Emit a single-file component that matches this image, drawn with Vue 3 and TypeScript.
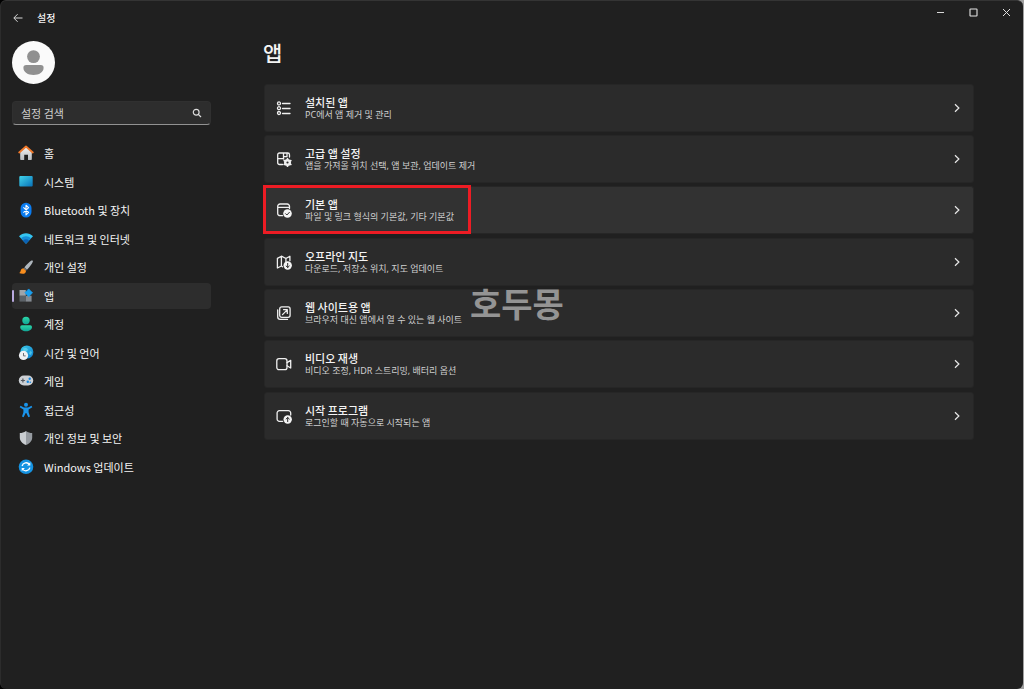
<script setup lang="ts">
import { ref } from 'vue'

interface NavItem { id: string; label: string }
interface AppCard { id: string; title: string; text: string; marked?: boolean }

const query = ref('')
const current = ref('apps')

const navItems: NavItem[] = [
  { id: 'home', label: '홈' },
  { id: 'system', label: '시스템' },
  { id: 'bluetooth', label: 'Bluetooth 및 장치' },
  { id: 'network', label: '네트워크 및 인터넷' },
  { id: 'personal', label: '개인 설정' },
  { id: 'apps', label: '앱' },
  { id: 'accounts', label: '계정' },
  { id: 'time', label: '시간 및 언어' },
  { id: 'gaming', label: '게임' },
  { id: 'access', label: '접근성' },
  { id: 'privacy', label: '개인 정보 및 보안' },
  { id: 'update', label: 'Windows 업데이트' },
]

const cards: AppCard[] = [
  { id: 'installed', title: '설치된 앱', text: 'PC에서 앱 제거 및 관리' },
  { id: 'advanced', title: '고급 앱 설정', text: '앱을 가져올 위치 선택, 앱 보관, 업데이트 제거' },
  { id: 'default', title: '기본 앱', text: '파일 및 링크 형식의 기본값, 기타 기본값', marked: true },
  { id: 'maps', title: '오프라인 지도', text: '다운로드, 저장소 위치, 지도 업데이트' },
  { id: 'websites', title: '웹 사이트용 앱', text: '브라우저 대신 앱에서 열 수 있는 웹 사이트' },
  { id: 'video', title: '비디오 재생', text: '비디오 조정, HDR 스트리밍, 배터리 옵션' },
  { id: 'startup', title: '시작 프로그램', text: '로그인할 때 자동으로 시작되는 앱' },
]
</script>

<template>
  <div class="window">
    <header class="titlebar">
      <div class="title-left">
        <button class="back" type="button" aria-label="뒤로">
          <svg width="10" height="10" viewBox="0 0 10 10" fill="none" stroke="#d8d8d8"><path d="M9.5 5H1M4.6 1.2L.8 5l3.8 3.8" /></svg>
        </button>
        <span class="app-name">설정</span>
      </div>
      <div class="controls">
        <button type="button" aria-label="최소화"><svg width="9" height="9" viewBox="0 0 9 9" fill="none" stroke="#d8d8d8"><path d="M1 4.5h7" /></svg></button>
        <button type="button" aria-label="최대화"><svg width="9" height="9" viewBox="0 0 9 9" fill="none" stroke="#e4e4e4" stroke-width="1.1"><rect x="1" y="1" width="7" height="7" rx=".6" /></svg></button>
        <button type="button" aria-label="닫기"><svg width="9" height="9" viewBox="0 0 9 9" fill="none" stroke="#e0e0e0"><path d="M1 1l7 7M8 1L1 8" /></svg></button>
      </div>
    </header>

    <div class="layout">
      <aside class="sidebar">
        <div class="avatar">
          <svg width="43" height="43" viewBox="0 0 43 43"><circle cx="21.5" cy="21.5" r="21.5" fill="#fafafa" /><g fill="#909090"><circle cx="21.5" cy="15.6" r="6.4" /><path d="M14.2 24h14.6a2.8 2.8 0 0 1 2.8 2.8c0 4.6-4.6 7.2-10.1 7.2s-10.1-2.6-10.1-7.2a2.8 2.8 0 0 1 2.8-2.8z" /></g></svg>
        </div>

        <label class="search">
          <input v-model="query" type="text" placeholder="설정 검색" aria-label="설정 검색" />
          <svg width="10" height="10" viewBox="0 0 10 10" fill="none" stroke="#dedede" stroke-width="1.2"><circle cx="4.2" cy="4.2" r="2.9" /><path d="M6.3 6.3L9 9" /></svg>
        </label>

        <nav class="nav">
          <a
            v-for="item in navItems"
            :key="item.id"
            href="#"
            class="nav-item"
            :class="{ active: item.id === current }"
            :aria-current="item.id === current ? 'page' : undefined"
            @click.prevent="current = item.id"
          >
            <svg width="16" height="16" viewBox="0 0 16 16" aria-hidden="true">
              <defs>
                <linearGradient id="g-screen" x1="0" y1="0" x2="1" y2="1"><stop offset="0" stop-color="#41d4ea" /><stop offset="1" stop-color="#0871b8" /></linearGradient>
                <linearGradient id="g-wall" x1="0" y1="0" x2="0" y2="1"><stop offset="0" stop-color="#f4f4f4" /><stop offset="1" stop-color="#b9bcc0" /></linearGradient>
                <linearGradient id="g-person" x1="0" y1="0" x2="0" y2="1"><stop offset="0" stop-color="#2bd6a8" /><stop offset="1" stop-color="#12a595" /></linearGradient>
                <linearGradient id="g-globe" x1="0" y1="0" x2="1" y2="1"><stop offset="0" stop-color="#3ecbe8" /><stop offset="1" stop-color="#0b7fd0" /></linearGradient>
              </defs>
              <template v-if="item.id === 'home'">
                <path d="M2.2 7L8 1.8 13.8 7v7.2a.7.7 0 0 1-.7.7H10V9.8H6.2v5.1H2.9a.7.7 0 0 1-.7-.7z" fill="url(#g-wall)" />
                <path d="M1.2 7.5L8 1.5l6.8 6" fill="none" stroke="#f0782a" stroke-width="1.8" stroke-linecap="round" stroke-linejoin="round" />
              </template>
              <template v-else-if="item.id === 'system'">
                <rect x="1.3" y="2" width="13.4" height="10.4" rx="1" fill="url(#g-screen)" />
              </template>
              <template v-else-if="item.id === 'bluetooth'">
                <rect x="2.6" y=".7" width="10.9" height="14.8" rx="5.4" fill="#0a7cf0" />
                <path d="M5.4 5.4l5.2 5L8 12.8V3.2l2.6 2.4-5.2 5" fill="none" stroke="#fff" stroke-width="1.1" stroke-linejoin="round" />
              </template>
              <template v-else-if="item.id === 'network'">
                <path d="M1 5.2C4.8 1.1 11.2 1.1 15 5.2L8 12.8z" fill="#35c5f1" />
                <path d="M2.9 7.3C5.7 4.400 10.3 4.400 13.1 7.300L8 12.800z" fill="#168ed8" />
                <path d="M5 9.500c1.700-1.600 4.300-1.600 6 0l-3 3.300z" fill="#0c61b4" />
              </template>
              <template v-else-if="item.id === 'personal'">
                <path d="M13.4 1.6c.8-.6 1.8.1 1.5 1C14.1 5 11.5 8.3 9 10.7L6.5 8.3C8.5 5.8 11.3 3 13.4 1.6z" fill="#aeb6bd" />
                <path d="M6.5 8.3L9 10.7l-1 1.1L5.4 9.4z" fill="#6b747c" />
                <path d="M5.4 9.2L8 11.7c.1 2-1.3 3.1-3.3 3.1-1.3 0-2.6-.2-3.6-.8 1.5-.6 1.2-1.8 1.8-3 .5-1.1 1.3-1.8 2.5-1.8z" fill="#f78d1e" />
              </template>
              <template v-else-if="item.id === 'apps'">
                <rect x="1.500" y="2" width="6.300" height="5.800" fill="#9ea4aa" />
                <rect x="1.500" y="7.800" width="6.300" height="5.800" fill="#5c6268" />
                <rect x="7.800" y="7.800" width="5.800" height="5.800" fill="#858b92" />
                <path d="M10.700.9L14.600 4.800l-3.900 3.900-3.900-3.900z" fill="#1aa0f0" stroke="#1aa0f0" stroke-width=".6" stroke-linejoin="round" />
              </template>
              <template v-else-if="item.id === 'accounts'">
                <circle cx="8" cy="4.500" r="3.700" fill="url(#g-person)" />
                <path d="M4 9.200h8.200a1.800 1.800 0 0 1 1.800 1.800c0 2.700-2.600 4.200-5.900 4.200S2.200 13.700 2.200 11A1.800 1.800 0 0 1 4 9.200z" fill="url(#g-person)" />
              </template>
              <template v-else-if="item.id === 'time'">
                <circle cx="8.800" cy="7" r="6.600" fill="url(#g-globe)" />
                <path d="M5 3.500l3-.8 2 1.500-1 2-3 .5M12 6l2 1-1 3-2-1z" fill="#70dff2" opacity=".6" />
                <circle cx="5.500" cy="10.400" r="4.600" fill="#eef0f2" />
                <path d="M5.500 8v2.900h2.200" fill="none" stroke="#6c7176" stroke-width="1" />
              </template>
              <template v-else-if="item.id === 'gaming'">
                <rect x=".8" y="2.500" width="14.400" height="10" rx="5" fill="#ccd0d5" />
                <path d="M4.900 5.500v4M2.900 7.500h4" stroke="#53585e" stroke-width="1.200" />
                <circle cx="11.700" cy="5.700" r="1.200" fill="#1787dc" />
                <circle cx="9.800" cy="8.800" r="1.200" fill="#1787dc" />
                <circle cx="12.300" cy="9.200" r=".8" fill="#1787dc" />
              </template>
              <template v-else-if="item.id === 'access'">
                <circle cx="8" cy="2.700" r="2" fill="#1a94ea" />
                <path d="M2.500 3.700L6 5.600h4l3.500-1.900.8 1.500-3.700 2.300v2.700l1.400 4.400-1.600.6L8.300 11h-.6l-2.100 4.200-1.600-.6 1.400-4.400V7.500L1.700 5.200z" fill="#1a94ea" />
              </template>
              <template v-else-if="item.id === 'privacy'">
                <path d="M8 1c2 1.500 4 2 6.200 2.100v4.300c0 3.500-2.600 6.100-6.200 7.600z" fill="#969ba1" />
                <path d="M8 1C6 2.500 4 3 1.800 3.100v4.300C1.800 10.900 4.400 13.500 8 15z" fill="#c9cdd1" />
              </template>
              <template v-else>
                <circle cx="8" cy="7.800" r="7.300" fill="#1593e2" />
                <path d="M4.100 7A4.100 4.100 0 0 1 11.500 5.600M11.900 8.600A4.100 4.100 0 0 1 4.500 10" fill="none" stroke="#fff" stroke-width="1.300" />
                <path d="M12.300 3.300v3.200H9.100zM3.700 12.300V9.100h3.200z" fill="#fff" />
              </template>
            </svg>
            <span>{{ item.label }}</span>
          </a>
        </nav>
      </aside>

      <main class="content">
        <h1>앱</h1>
        <div class="cards">
          <button v-for="card in cards" :key="card.id" type="button" class="card" :class="{ marked: card.marked }">
            <svg class="card-icon" width="16" height="16" viewBox="0 0 16 16" fill="none" stroke="#f0f0f0" stroke-width="1.300" stroke-linecap="round" stroke-linejoin="round" aria-hidden="true">
              <template v-if="card.id === 'installed'">
                <circle cx="3" cy="3.400" r="1.500" /><circle cx="3" cy="8.200" r="1.500" /><circle cx="3" cy="13" r="1.500" />
                <path d="M6.500 3.500h7.500M6.500 8.500h7.500M6.500 13.500h7.500" />
              </template>
              <template v-else-if="card.id === 'advanced'">
                <path d="M6.500 13.500H3.500a1.800 1.800 0 0 1-1.800-1.800V3.800A1.800 1.800 0 0 1 3.500 2h8.200a1.800 1.800 0 0 1 1.800 1.800V6M7.500 2v6M1.700 7.700h6M11 2v3.600H7.500" />
                <circle cx="11.500" cy="11.500" r="2.300" stroke-width="2.400" />
                <path d="M11.500 7.700v1M11.500 14.300v1M8.200 9.600l1 .5M13.800 12.900l1 .5M14.800 9.600l-1 .5M9.200 12.900l-1 .5" stroke-width="1.700" />
              </template>
              <template v-else-if="card.id === 'default'">
                <path d="M6.500 13.700H4a2.300 2.300 0 0 1-2.300-2.300V4.300A2.300 2.300 0 0 1 4 2h7.200a2.300 2.300 0 0 1 2.300 2.300v2.200M1.700 5.300h11.800" />
                <circle cx="11.500" cy="11.500" r="4.300" fill="#f4f4f4" stroke="none" />
                <path d="M9.600 11.700l1.300 1.300 2.500-2.700" stroke="#303030" stroke-width="1" />
              </template>
              <template v-else-if="card.id === 'maps'">
                <path d="M6.500 12.800L5.400 12l-4 2V4.400l4-2.200 4.500 2.300 4-2.300v4.500M5.400 2.200V12M9.900 4.500v3" />
                <circle cx="11.700" cy="11.500" r="4.200" fill="#f4f4f4" stroke="none" />
                <path d="M11.700 9.400v4M10.100 12l1.600 1.500 1.600-1.500" stroke="#2b2b2b" stroke-width="1" />
              </template>
              <template v-else-if="card.id === 'websites'">
                <rect x="3.700" y="1.900" width="10.400" height="10.400" rx="2" />
                <path d="M1.700 4.800v7a2.600 2.600 0 0 0 2.600 2.600h7.200M6.500 9.600l4.700-4.700M7.600 4.700h3.700v3.700" />
              </template>
              <template v-else-if="card.id === 'video'">
                <rect x=".8" y="2.700" width="10.200" height="11" rx="2.200" />
                <path d="M11 6.600l3.700-2.200v7.600L11 9.800" />
              </template>
              <template v-else>
                <path d="M6.700 13.300H3.400A2.300 2.300 0 0 1 1.100 11V5A2.300 2.300 0 0 1 3.400 2.700h9A2.300 2.300 0 0 1 14.700 5v2" />
                <circle cx="11.700" cy="11.500" r="4.200" fill="#f4f4f4" stroke="none" />
                <path d="M11.700 13.600v-4M10.100 11l1.600-1.500 1.600 1.500" stroke="#2b2b2b" stroke-width="1" />
              </template>
            </svg>
            <span class="card-text">
              <span class="card-title">{{ card.title }}</span>
              <span class="card-sub">{{ card.text }}</span>
            </span>
            <svg class="chevron" width="8" height="10" viewBox="0 0 8 10" fill="none" stroke="#e8e8e8" stroke-width="1.200"><path d="M2 1.200L5.900 5 2 8.800" /></svg>
          </button>
        </div>
        <div class="watermark">호두몽</div>
      </main>
    </div>
  </div>
</template>

<style>
html { background: linear-gradient(to right, #000 60%, #a0a0a0 90%); }
body { margin: 0; }
</style>

<style scoped>
.window {
  box-sizing: border-box;
  min-height: 100vh;
  margin-right: 1px;
  border-top: 1px solid #343434;
  border-left: 1px solid #2c2c2c;
  border-radius: 6px;
  background: #202020;
  color: #f4f4f4;
  font-family: "Noto Sans CJK KR", "Noto Sans", sans-serif;
  font-size: 11px;
  line-height: 16px;
}
button {
  margin: 0;
  padding: 0;
  border: 0;
  background: none;
  color: inherit;
  font: inherit;
}
svg { display: block; flex: none; }
.titlebar {
  display: flex;
  justify-content: space-between;
  align-items: flex-start;
  height: 40px;
}
.title-left {
  display: flex;
  align-items: center;
  gap: 14px;
  padding: 9px 0 0 12px;
}
.app-name { font-size: 10px; font-weight: 500; }
.controls { display: flex; }
.controls button {
  display: flex;
  align-items: center;
  justify-content: center;
  width: 33px;
  height: 22px;
}
.layout { display: flex; }
.sidebar {
  flex: none;
  width: 199px;
  padding-left: 11px;
}
.avatar { margin-bottom: 17px; }
.search {
  display: flex;
  align-items: center;
  box-sizing: border-box;
  height: 24px;
  padding: 0 8px;
  border: 1px solid #303030;
  border-bottom-color: #929292;
  border-radius: 4px;
  background: #2d2d2d;
}
.search input {
  flex: 1;
  min-width: 0;
  padding: 0;
  border: 0;
  outline: 0;
  background: none;
  color: #f4f4f4;
  font: inherit;
}
.search input::placeholder { color: #cfcfcf; opacity: 1; }
.nav {
  display: flex;
  flex-direction: column;
  margin-top: 15px;
}
.nav-item {
  position: relative;
  display: flex;
  align-items: center;
  gap: 10px;
  height: 26px;
  margin-bottom: 3px;
  padding-left: 6px;
  border-radius: 4px;
  color: inherit;
  text-decoration: none;
}
.nav-item:nth-child(even) { margin-bottom: 2px; }
.nav-item.active { background: #2d2d2d; }
.nav-item.active::before {
  content: "";
  position: absolute;
  left: 0;
  top: 7px;
  width: 2px;
  height: 12px;
  border-radius: 1px;
  background: #b9a9e0;
}
.content {
  position: relative;
  flex: 1;
  min-width: 0;
  padding: 0 49px 0 53px;
}
h1 {
  margin: -3px 0 18px -1px;
  font-size: 21px;
  line-height: 28px;
  font-weight: 500;
}
.cards { display: flex; flex-direction: column; }
.card {
  position: relative;
  display: flex;
  align-items: center;
  box-sizing: border-box;
  width: 100%;
  height: 48px;
  margin-bottom: 3px;
  padding: 0 12px 0 11px;
  border: 1px solid #262626;
  border-radius: 3px;
  background: #2b2b2b;
  text-align: left;
}
.card:nth-child(3n) { margin-bottom: 4px; }
.card.marked { background: #323232; }
.card.marked::after {
  content: "";
  position: absolute;
  box-sizing: border-box;
  top: -2px;
  bottom: -1px;
  left: -2px;
  width: 208px;
  border: 3px solid #ed1c24;
}
.card-text {
  display: flex;
  flex: 1;
  flex-direction: column;
  padding-left: 13px;
}
.card-title { font-weight: 500; line-height: 13px; }
.card-sub {
  color: #d0d0d0;
  font-family: "Noto Sans", "Noto Sans CJK KR", sans-serif;
  font-size: 9px;
  line-height: 12px;
}
.watermark {
  position: absolute;
  top: 238px;
  left: 259px;
  color: #949494;
  font-size: 34px;
  font-weight: 700;
  line-height: 48px;
  pointer-events: none;
}
</style>
